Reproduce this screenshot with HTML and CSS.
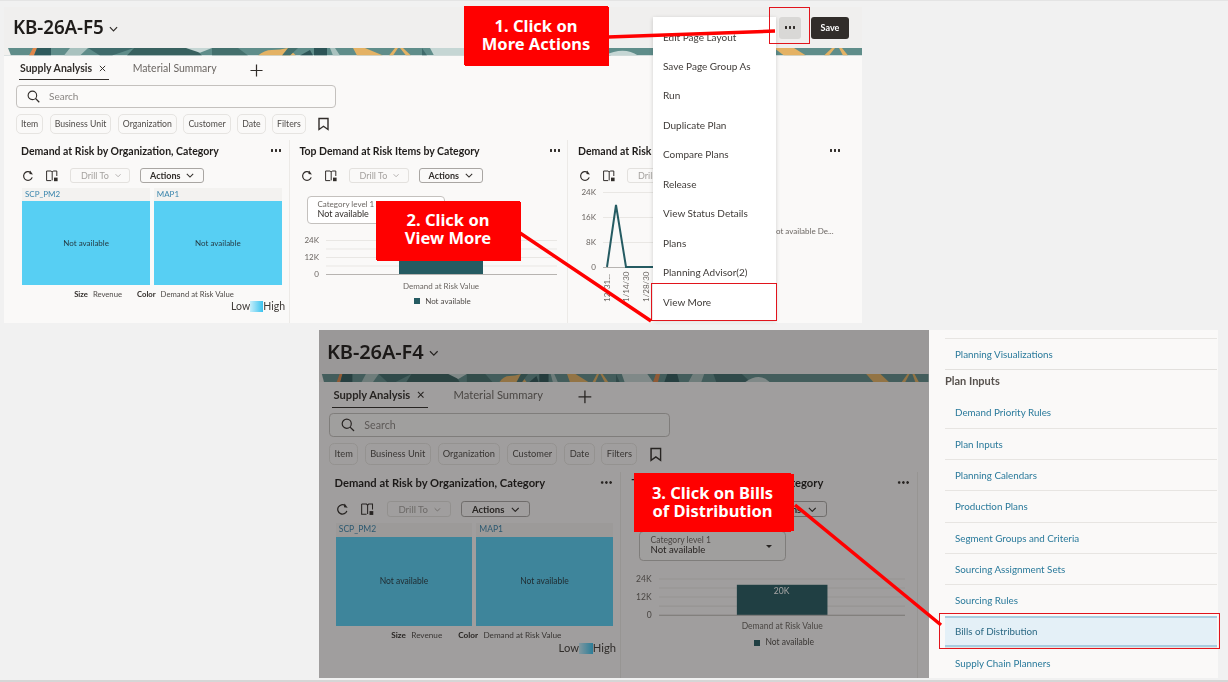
FILE: index.html
```html
<!DOCTYPE html>
<html lang="en">
<head>
<meta charset="utf-8">
<title>KB-26A More Actions</title>
<link rel="stylesheet" href="styles.css">
</head>
<body>
<svg class="defs" width="0" height="0" aria-hidden="true">
  <defs>
    <symbol id="i-refresh" viewBox="0 0 12 12"><path d="M10.2 7.4A4.4 4.4 0 1 1 8.6 2.4" fill="none" stroke="currentColor" stroke-width="1.2"/><path d="M7.6 0.6v3.6h3.6z" fill="currentColor" transform="rotate(10 9 3)"/></symbol>
    <symbol id="i-book" viewBox="0 0 12 12"><path d="M0.6 1h4.6l1 1 1-1h3.600v5M6.200 2v8.400M5.200 10.600H0.600V1" fill="none" stroke="currentColor" stroke-width="1"/><rect x="8" y="7.600" width="3.600" height="3.600" fill="currentColor"/></symbol>
    <symbol id="i-chev" viewBox="0 0 10 6"><path d="M1 1l4 4 4-4" fill="none" stroke="currentColor" stroke-width="1.3"/></symbol>
    <symbol id="i-search" viewBox="0 0 14 14"><circle cx="5.800" cy="5.800" r="4.600" fill="none" stroke="currentColor" stroke-width="1.200"/><path d="M9.200 9.200l4 4" stroke="currentColor" stroke-width="1.300"/></symbol>
    <symbol id="i-mark" viewBox="0 0 11 13"><path d="M1 1h9v11L5.500 8.800 1 12z" fill="none" stroke="currentColor" stroke-width="1.400"/></symbol>
    <symbol id="i-plus" viewBox="0 0 14 14"><path d="M7 0.500v13M0.500 7h13" stroke="currentColor" stroke-width="1.300"/></symbol>
    <symbol id="i-close" viewBox="0 0 8 8"><path d="M1 1l6 6M7 1L1 7" stroke="currentColor" stroke-width="1.100"/></symbol>
    <symbol id="banner" viewBox="0 0 858 8" preserveAspectRatio="none">
      <rect width="858" height="8" fill="#5f8d8a"/>
      <path d="M0 0h4l3 8H0z" fill="#f1f0ee"/>
      <path d="M25 8l4-8h4l-3 8z" fill="#e0874a"/>
      <path d="M33 0h14v8H30z" fill="#2f5a5c"/>
      <path d="M60 8l6-8h18l-8 8z" fill="#a9c2bf"/>
      <path d="M84 0l12 8h12l22-8z" fill="#3f6b6b"/>
      <path d="M130 0h60l8 8h-75z" fill="#38615f"/>
      <path d="M182 0h26l-12 5z" fill="#c5d6d4"/>
      <path d="M208 0h26l10 8h-36z" fill="#44706d"/>
      <path d="M254 8q6-6 14-6t16-2l8 8z" fill="#e4b264"/>
      <path d="M284 0h10l-8 8h-8z" fill="#44706d"/>
      <path d="M296 8l10-6 3 6z" fill="#2e5557"/>
      <path d="M310 0h13v8h-13z" fill="#2c5456"/>
      <path d="M326 0h5l5 8h-7z" fill="#a9c2bf"/>
      <path d="M349 0h12l18 8h-26z" fill="#e4b264"/>
      <path d="M385 8l6-8h3l-5 8z" fill="#e4b264"/>
      <path d="M396 0h3l8 8h-5z" fill="#e4b264"/>
      <path d="M418 0l5 8h-5z" fill="#3f6b6b"/>
      <path d="M426 0h36l8 8h-40z" fill="#c5d6d4"/>
      <path d="M474 0h6l-3 8h-7z" fill="#e0874a"/>
      <path d="M486 8l4-8h14l3 8z" fill="#2f5a5c"/>
      <path d="M520 8l6-8h16l-4 8z" fill="#a9c2bf"/>
      <path d="M555 0h40l12 8h-48z" fill="#3f6b6b"/>
      <path d="M600 8q20-10 34 0z" fill="#c5d6d4"/>
      <path d="M770 0h20l12 8h-22z" fill="#e4b264"/>
      <path d="M820 8l8-8h3l-6 8z" fill="#e4b264"/>
      <path d="M835 0h3l6 8h-5z" fill="#e4b264"/>
    </symbol>
  </defs>
</svg>

<main class="slide">

  <!-- first screenshot -->
  <section class="shot shot-a">
    <header class="page-head">
      <h1 class="page-title">KB-26A-F5</h1>
      <svg class="title-chev"><use href="#i-chev"/></svg>
      <span class="head-gap"></span>
      <span class="more-btn"><i class="dots"></i></span>
      <span class="save-btn">Save</span>
    </header>
    <svg class="banner"><use href="#banner"/></svg>
    <div class="page-body">
      <nav class="tabs">
        <span class="tab tab-on">Supply Analysis <svg class="tab-x"><use href="#i-close"/></svg></span>
        <span class="tab">Material Summary</span>
        <svg class="tab-plus"><use href="#i-plus"/></svg>
      </nav>
      <div class="search"><svg class="search-i"><use href="#i-search"/></svg><span>Search</span></div>
      <div class="chips">
        <span class="chip">Item</span><span class="chip">Business Unit</span><span class="chip">Organization</span><span class="chip">Customer</span><span class="chip">Date</span><span class="chip">Filters</span>
        <svg class="mark"><use href="#i-mark"/></svg>
      </div>
      <div class="cards">
        <article class="card">
          <div class="card-head"><h2>Demand at Risk by Organization, Category</h2><i class="dots"></i></div>
          <div class="tools">
            <svg class="tool"><use href="#i-refresh"/></svg><svg class="tool"><use href="#i-book"/></svg>
            <span class="btn btn-off">Drill To <svg class="chev"><use href="#i-chev"/></svg></span>
            <span class="btn">Actions <svg class="chev"><use href="#i-chev"/></svg></span>
          </div>
          <div class="tree">
            <div class="tree-col"><div class="tree-h">SCP_PM2</div><div class="tree-b">Not available</div></div>
            <div class="tree-col"><div class="tree-h">MAP1</div><div class="tree-b">Not available</div></div>
          </div>
          <div class="tree-legend"><b>Size</b><span>Revenue</span><b class="gap">Color</b><span>Demand at Risk Value</span></div>
          <div class="lowhigh">Low<i></i>High</div>
        </article>
        <article class="card">
          <div class="card-head"><h2>Top Demand at Risk Items by Category</h2><i class="dots"></i></div>
          <div class="tools">
            <svg class="tool"><use href="#i-refresh"/></svg><svg class="tool"><use href="#i-book"/></svg>
            <span class="btn btn-off">Drill To <svg class="chev"><use href="#i-chev"/></svg></span>
            <span class="btn">Actions <svg class="chev"><use href="#i-chev"/></svg></span>
          </div>
          <div class="select"><small>Category level 1</small><span>Not available</span></div>
          <svg class="bar-chart" viewBox="0 0 262 48">
            <g class="grid"><path d="M31 6.500h231M31 15h231M31 23.500h231M31 32h231"/></g>
            <rect x="104" y="12" width="84" height="28.500" fill="#255b62"/>
            <path d="M31 40.500h231" class="axis"/>
            <g class="ax"><text x="24" y="9" text-anchor="end">24K</text><text x="24" y="26" text-anchor="end">12K</text><text x="24" y="43" text-anchor="end">0</text></g>
          </svg>
          <div class="bar-label">Demand at Risk Value</div>
          <div class="bar-key"><i></i>Not available</div>
        </article>
        <article class="card">
          <div class="card-head"><h2>Demand at Risk Trend by Category</h2><i class="dots"></i></div>
          <div class="tools">
            <svg class="tool"><use href="#i-refresh"/></svg><svg class="tool"><use href="#i-book"/></svg>
            <span class="btn btn-off">Drill To <svg class="chev"><use href="#i-chev"/></svg></span>
          </div>
          <svg class="line-chart" viewBox="0 0 278 118">
            <g class="grid"><path d="M30 5.500h80M30 30.500h80M30 55.500h80"/></g>
            <path d="M30 80.500h80" class="axis"/>
            <path d="M34 80L43 18l10 62h60" fill="none" stroke="#255b62" stroke-width="2"/>
            <g class="ax">
              <text x="23" y="8" text-anchor="end">24K</text><text x="23" y="33" text-anchor="end">16K</text><text x="23" y="58" text-anchor="end">8K</text><text x="23" y="83" text-anchor="end">0</text>
              <text transform="translate(37 115) rotate(-90)">12/31...</text>
              <text transform="translate(56 115) rotate(-90)">1/14/30</text>
              <text transform="translate(76 115) rotate(-90)">1/28/30</text>
              <text x="197" y="47">Not available De...</text>
            </g>
          </svg>
        </article>
      </div>
    </div>
  </section>

  <!-- second screenshot -->
  <section class="shot shot-b">
    <header class="page-head">
      <h1 class="page-title">KB-26A-F4</h1>
      <svg class="title-chev"><use href="#i-chev"/></svg>
    </header>
    <svg class="banner"><use href="#banner"/></svg>
    <div class="page-body">
      <nav class="tabs">
        <span class="tab tab-on">Supply Analysis <svg class="tab-x"><use href="#i-close"/></svg></span>
        <span class="tab">Material Summary</span>
        <svg class="tab-plus"><use href="#i-plus"/></svg>
      </nav>
      <div class="search"><svg class="search-i"><use href="#i-search"/></svg><span>Search</span></div>
      <div class="chips">
        <span class="chip">Item</span><span class="chip">Business Unit</span><span class="chip">Organization</span><span class="chip">Customer</span><span class="chip">Date</span><span class="chip">Filters</span>
        <svg class="mark"><use href="#i-mark"/></svg>
      </div>
      <div class="cards">
        <article class="card">
          <div class="card-head"><h2>Demand at Risk by Organization, Category</h2><i class="dots"></i></div>
          <div class="tools">
            <svg class="tool"><use href="#i-refresh"/></svg><svg class="tool"><use href="#i-book"/></svg>
            <span class="btn btn-off">Drill To <svg class="chev"><use href="#i-chev"/></svg></span>
            <span class="btn">Actions <svg class="chev"><use href="#i-chev"/></svg></span>
          </div>
          <div class="tree">
            <div class="tree-col"><div class="tree-h">SCP_PM2</div><div class="tree-b">Not available</div></div>
            <div class="tree-col"><div class="tree-h">MAP1</div><div class="tree-b">Not available</div></div>
          </div>
          <div class="tree-legend"><b>Size</b><span>Revenue</span><b class="gap">Color</b><span>Demand at Risk Value</span></div>
          <div class="lowhigh">Low<i></i>High</div>
        </article>
        <article class="card">
          <div class="card-head"><h2>Top Demand at Risk Items by Category</h2><i class="dots"></i></div>
          <div class="tools">
            <svg class="tool"><use href="#i-refresh"/></svg><svg class="tool"><use href="#i-book"/></svg>
            <span class="btn btn-off">Drill To <svg class="chev"><use href="#i-chev"/></svg></span>
            <span class="btn">Actions <svg class="chev"><use href="#i-chev"/></svg></span>
          </div>
          <div class="select select-full"><small>Category level 1</small><span>Not available</span><b class="caret"></b></div>
          <svg class="bar-chart" viewBox="0 0 262 48">
            <g class="grid"><path d="M31 6.500h231M31 15h231M31 23.500h231M31 32h231"/></g>
            <rect x="104" y="12" width="85" height="28.500" fill="#255b62"/>
            <path d="M31 40.500h231" class="axis"/>
            <g class="ax"><text x="24" y="9" text-anchor="end">24K</text><text x="24" y="26" text-anchor="end">12K</text><text x="24" y="43" text-anchor="end">0</text>
            <text class="on-bar" x="146" y="21" text-anchor="middle">20K</text></g>
          </svg>
          <div class="bar-label">Demand at Risk Value</div>
          <div class="bar-key"><i></i>Not available</div>
        </article>
      </div>
    </div>
    <div class="dim"></div>
  </section>

  <aside class="side">
    <a class="side-link">Planning Visualizations</a>
    <h3 class="side-h">Plan Inputs</h3>
    <a class="side-link">Demand Priority Rules</a>
    <a class="side-link">Plan Inputs</a>
    <a class="side-link">Planning Calendars</a>
    <a class="side-link">Production Plans</a>
    <a class="side-link">Segment Groups and Criteria</a>
    <a class="side-link">Sourcing Assignment Sets</a>
    <a class="side-link">Sourcing Rules</a>
    <a class="side-link side-on">Bills of Distribution</a>
    <a class="side-link">Supply Chain Planners</a>
  </aside>

  <!-- More Actions menu -->
  <ul class="menu">
    <li>Edit Page Layout</li>
    <li>Save Page Group As</li>
    <li>Run</li>
    <li>Duplicate Plan</li>
    <li>Compare Plans</li>
    <li>Release</li>
    <li>View Status Details</li>
    <li>Plans</li>
    <li>Planning Advisor(2)</li>
    <li>View More</li>
  </ul>

  <!-- annotations -->
  <span class="hl hl-more"></span>
  <span class="hl hl-view"></span>
  <span class="hl hl-bills"></span>
  <svg class="lines" viewBox="0 0 1228 682">
    <path d="M608 37L775 31M520 233L651 321M795 505L941 625"/>
  </svg>
  <div class="callout c1">1. Click on<br>More Actions</div>
  <div class="callout c2">2. Click on<br>View More</div>
  <div class="callout c3">3. Click on Bills<br>of Distribution</div>
</main>
</body>
</html>
```

FILE: styles.css
```css
* { box-sizing: border-box; }
html, body { margin: 0; padding: 0; }
body { background: #f1f1f1; font-family: Lato, "Noto Sans", sans-serif; color: #312d2a; }
.defs { position: absolute; }
h1, h2, h3, ul { margin: 0; padding: 0; }

.slide { position: relative; width: 1228px; height: 682px; overflow: hidden; background: #f1f1f1; border-top: 1px solid #e4e4e4; border-bottom: 2px solid #d6d6d6; }

/* screenshots placed on the slide canvas */
.shot { position: absolute; display: flex; flex-direction: column; overflow: hidden; background: #faf9f8; filter: blur(.3px); }
.shot-a { left: 4px; top: 6px; width: 858px; height: 316px; }
.shot-b { left: 299.250px; top: 308.600px; width: 572px; height: 326.500px; zoom: 1.066; }
.shot-b .page-head { padding-left: 7.500px; }
.shot-b .page-body { margin-left: -2.400px; }

.page-head { flex: none; height: 41px; display: flex; align-items: center; padding: 0 13px 0 9px; background: #f0efee; }
.page-title { font-family: "Noto Sans", sans-serif; font-size: 18.800px; font-weight: 600; line-height: 1; letter-spacing: -.1px; color: #1f1c1a; }
.title-chev { width: 9px; height: 6px; margin: 2px 0 0 5.500px; color: #312d2a; }
.head-gap { flex: 1; }
.more-btn { width: 22px; height: 22px; margin-right: 10px; border-radius: 3px; background: #d9d8d6; display: flex; align-items: center; justify-content: center; }
.save-btn { width: 38px; height: 22px; border-radius: 3px; background: #312d2a; color: #fff; font-size: 9px; font-weight: 700; display: flex; align-items: center; justify-content: center; }
.banner { flex: none; display: block; width: 100%; height: 7.500px; }

.page-body { flex: 1; min-height: 0; display: flex; flex-direction: column; }
.tabs { flex: none; height: 25px; display: flex; align-items: flex-start; padding: 5px 0 0 15px; }
.tab { height: 19.500px; padding: 0 1px; font-size: 10.500px; line-height: 15px; color: #6b6662; margin-right: 23px; display: flex; white-space: pre; }
.tab-on { color: #312d2a; font-weight: 700; border-bottom: 1.500px solid #312d2a; }
.tab-x { width: 7px; height: 7px; margin: 4px 2px 0 4px; }
.tab-plus { width: 13px; height: 13px; margin: 3px 0 0 9px; color: #312d2a; }

.search { flex: none; height: 23px; width: 320px; margin: 4px 0 0 12px; padding-left: 10px; border: 1px solid #c4c1be; border-radius: 4px; background: #fbfaf9; display: flex; align-items: center; gap: 9px; font-size: 10px; color: #8a8683; }
.search-i { width: 13px; height: 13px; color: #312d2a; }

.chips { flex: none; height: 20px; margin: 6px 0 0 12px; display: flex; align-items: center; gap: 6.500px; }
.chip { height: 20px; padding: 0 4px; border: 1px solid #e6e4e1; border-radius: 5px; font-size: 8.700px; line-height: 18px; color: #4f4b48; }
.mark { width: 11px; height: 14px; margin-left: 6px; color: #312d2a; }

.cards { flex: 1; min-height: 0; margin-top: 6.500px; display: grid; grid-template-columns: 285.500px 278.500px 1fr; }
.card { position: relative; padding: 0 6.500px 0 17px; border-right: 1px solid #eceae7; min-width: 0; }
.card:nth-child(2) { padding-left: 10px; }
.card:nth-child(3) { padding: 0 21px 0 10px; border: 0; }
.card-head { height: 21px; display: flex; align-items: center; }
.card-head h2 { flex: 1; font-size: 10.500px; font-weight: 700; color: #1f1c1a; white-space: nowrap; }
.dots { flex: none; display: block; width: 12px; height: 3px; background: radial-gradient(circle, #312d2a 1.100px, transparent 1.400px) 0 0 / 4px 3px; }

.tools { height: 21px; margin-top: 4px; display: flex; align-items: center; padding-left: 1px; }
.tool { width: 12px; height: 12px; margin-right: 12px; color: #312d2a; }
.btn { height: 15px; padding: 0 9px; margin-right: 10px; border: 1px solid #a9a6a3; border-radius: 3px; font-size: 9px; font-weight: 700; display: flex; align-items: center; gap: 6px; white-space: nowrap; }
.btn-off { color: #a5a29f; border-color: #e3e1de; font-weight: 400; padding: 0 8px 0 10px; width: 60px; }
.chev { width: 8px; height: 5px; }

.tree { display: flex; gap: 3.500px; margin: 2px 0 0 1px; width: 260px; }
.tree-col { flex: 1; }
.tree-h { height: 13px; padding-left: 3px; background: #f3f2f0; font-size: 8px; line-height: 13px; color: #3b86ad; }
.tree-b { height: 84px; background: #57cff3; display: flex; align-items: center; justify-content: center; font-size: 8px; color: #253b44; }
.tree-legend { display: flex; justify-content: center; gap: 5px; margin-top: 4px; width: 266px; font-size: 7.700px; line-height: 10px; color: #4f4b48; }
.tree-legend b { font-weight: 700; color: #312d2a; }
.tree-legend .gap { margin-left: 10px; }
.lowhigh { display: flex; justify-content: flex-end; align-items: center; width: 264px; margin-top: 0; font-size: 10.500px; line-height: 14px; color: #3f3b38; }
.lowhigh i { width: 13px; height: 11px; background: linear-gradient(90deg, #c6eefb, #39c2ee); }

.select { width: 138px; height: 28px; margin: 10px 0 0 7px; padding: 3px 10px; border: 1px solid #c4c1be; border-radius: 4px; background: #fff; display: flex; flex-direction: column; font-size: 9px; line-height: 9.500px; position: relative; }
.select small { font-size: 8px; line-height: 9px; color: #6b6662; }
.select-full { background: #fbfaf9; }
.caret { position: absolute; right: 12px; top: 12px; border: 3px solid transparent; border-top: 3.500px solid #312d2a; border-bottom: 0; }
.bar-chart { display: block; width: 262px; height: 48px; margin: 10px 0 0 -5px; }
.grid path { stroke: #e9e7e4; stroke-width: 1; fill: none; }
.axis { stroke: #b7b4b1; stroke-width: 1; fill: none; }
.ax text { font-size: 8px; fill: #6b6662; font-family: Lato, sans-serif; }
.ax .on-bar { fill: #fff; }
.bar-label { margin: -1.500px 0 0 26px; width: 231px; text-align: center; font-size: 8px; line-height: 10px; color: #6b6662; }
.bar-key { margin: 5px 0 0 26px; padding-left: 3px; width: 231px; display: flex; justify-content: center; align-items: center; gap: 5px; font-size: 8px; line-height: 10px; color: #4f4b48; }
.bar-key i { width: 6px; height: 6px; background: #255b62; }
.line-chart { display: block; width: 278px; height: 118px; margin: 1px 0 0 -5px; }

.dim { position: absolute; inset: 0; background: rgba(25, 22, 22, .4); }

.side { position: absolute; left: 929px; top: 329px; width: 289px; height: 348px; padding: 8px 1px 0 16px; background: #faf9f8; filter: blur(.2px); }
.side-link { display: flex; align-items: center; height: 31.330px; padding-left: 10px; border-top: 1px solid #e7e5e2; font-size: 9.800px; color: #2a7a9b; }
.side-h { height: 27px; padding-top: 3px; font-size: 11px; font-weight: 700; line-height: 16px; color: #57524e; border-top: 1px solid #e2e0dd; }
.side-h + .side-link { border-top: 0; }
.side-on { background: #e4f0f7; border-top: 2px solid #a9cde0; border-bottom: 2px solid #a9cde0; color: #2d6a85; }

.menu { position: absolute; left: 653px; top: 16px; width: 123px; height: 303px; padding: 5.500px 0 0; list-style: none; background: #fff; box-shadow: 0 1px 4px rgba(0, 0, 0, .18); filter: blur(.2px); }
.menu li { height: 29.460px; padding-left: 10px; font-size: 10px; line-height: 29px; color: #3f3b38; white-space: nowrap; }

.hl { position: absolute; border: 1px solid #e1141c; }
.hl-more { left: 769px; top: 6px; width: 41px; height: 37px; }
.hl-view { left: 651px; top: 282px; width: 126px; height: 38px; }
.hl-bills { left: 939px; top: 612px; width: 281px; height: 36px; }

.lines { position: absolute; left: 0; top: -1px; width: 1228px; height: 682px; pointer-events: none; }
.lines path { stroke: #f00; stroke-width: 3.500; fill: none; }

.callout { position: absolute; height: 59px; padding-bottom: 2px; background: #f00; color: #fff; font-family: "Noto Sans", sans-serif; font-size: 16.500px; font-weight: 700; line-height: 18px; text-align: center; display: flex; align-items: center; justify-content: center; box-shadow: 1px 1px 0 #f00; }
.c1 { left: 464px; top: 5px; width: 144px; }
.c2 { left: 376px; top: 200px; width: 144px; padding-bottom: 3px; }
.c3 { left: 634px; top: 472px; width: 157px; box-shadow: 4px 0 0 -1px #f00; }
```
